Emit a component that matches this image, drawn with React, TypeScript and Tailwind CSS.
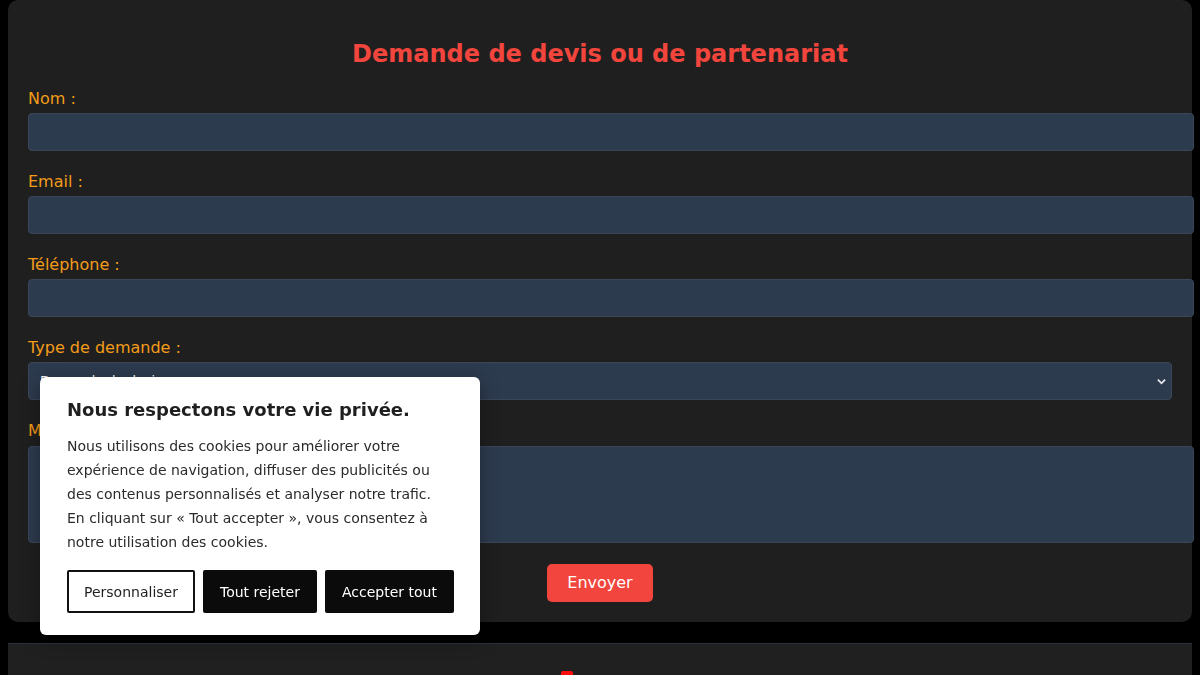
import { useState } from 'react';

const fields = [
  { id: 'nom', label: 'Nom :', type: 'text' },
  { id: 'email', label: 'Email :', type: 'email' },
  { id: 'tel', label: 'Téléphone :', type: 'tel' },
];

const inputClass =
  'box-content block w-full h-4 px-[10px] py-[10px] mb-[21px] rounded-[4px] border border-[#3b4758] bg-[#2d3b4f] text-white text-sm outline-none';

const btnBase = 'h-[43px] shrink-0 whitespace-nowrap px-[15px] border-2 rounded-[2px] text-sm';

function CookieBanner() {
  const [open, setOpen] = useState(true);
  if (!open) return null;

  return (
    <div className="fixed left-10 bottom-10 w-[440px] rounded-[6px] bg-white px-[27px] pt-[22px] pb-[22px] shadow-[0_4px_20px_rgba(0,0,0,0.35)]">
      <h3 className="text-[18px] leading-[21px] font-bold text-[#1f1f1f] mb-[14px]">
        Nous respectons votre vie privée.
      </h3>
      <p className="text-sm leading-6 text-[#2b2b2b]">
        Nous utilisons des cookies pour améliorer votre expérience de navigation, diffuser des
        publicités ou des contenus personnalisés et analyser notre trafic. En cliquant sur « Tout
        accepter », vous consentez à notre utilisation des cookies.
      </p>
      <div className="mt-4 flex gap-2">
        <button
          onClick={() => setOpen(false)}
          className={`${btnBase} border-[#111] bg-white text-[#1f1f1f]`}
        >
          Personnaliser
        </button>
        <button
          onClick={() => setOpen(false)}
          className={`${btnBase} border-[#0b0b0b] bg-[#0b0b0b] text-white`}
        >
          Tout rejeter
        </button>
        <button
          onClick={() => setOpen(false)}
          className={`${btnBase} border-[#0b0b0b] bg-[#0b0b0b] text-white`}
        >
          Accepter tout
        </button>
      </div>
    </div>
  );
}

export default function App() {
  return (
    <div className="min-h-screen bg-black px-2 font-['DejaVu_Sans',sans-serif]">
      <form
        onSubmit={(e) => e.preventDefault()}
        className="rounded-[10px] bg-[#1f1f1f] p-5 shadow-[0_2px_6px_rgba(0,0,0,0.5)]"
      >
        <h2 className="mt-5 mb-5 text-center text-2xl leading-[29px] font-bold text-[#f1453d]">
          Demande de devis ou de partenariat
        </h2>

        {fields.map((f) => (
          <div key={f.id}>
            <label htmlFor={f.id} className="block mb-[5px] text-base leading-[19px] text-[#f39c1a]">
              {f.label}
            </label>
            <input id={f.id} type={f.type} className={inputClass} />
          </div>
        ))}

        <label htmlFor="type" className="block mb-[5px] text-base leading-[19px] text-[#f39c1a]">
          Type de demande :
        </label>
        <div className="relative mb-[21px]">
          <select
            id="type"
            className="block w-full h-[38px] appearance-none rounded-[4px] border border-[#3b4758] bg-[#2d3b4f] px-[11px] text-[13px] text-white outline-none"
          >
            <option>Demande de devis</option>
            <option>Partenariat</option>
            <option>Autre</option>
          </select>
          <svg
            className="pointer-events-none absolute right-[6px] top-[15px] h-[9px] w-[9px]"
            viewBox="0 0 10 10"
            fill="none"
            stroke="#e5e7eb"
            strokeWidth="2"
          >
            <path d="M1 3l4 4 4-4" />
          </svg>
        </div>

        <label htmlFor="msg" className="block mb-[6px] text-base leading-[19px] text-[#f39c1a]">
          Message :
        </label>
        <textarea
          id="msg"
          className="box-content block w-full h-[75px] p-[10px] rounded-[4px] border border-[#3b4758] bg-[#2d3b4f] text-white text-sm outline-none resize-none"
        />

        <div className="mt-[21px] flex justify-center">
          <button
            type="submit"
            className="h-[38px] px-5 rounded-[5px] bg-[#f1453d] text-base text-white"
          >
            Envoyer
          </button>
        </div>
      </form>

      <footer className="mt-[21px] h-[60px] border-t border-[#2b323b] bg-[#202020]">
        <div className="mx-auto mt-[26px] w-[78px]">
          <svg width="14" height="12" viewBox="0 0 14 12" className="-ml-[1px]">
            <path d="M3 1h8a2 2 0 0 1 2 2v9H1V3a2 2 0 0 1 2-2z" fill="#ff0d0d" />
          </svg>
        </div>
      </footer>

      <CookieBanner />
    </div>
  );
}
